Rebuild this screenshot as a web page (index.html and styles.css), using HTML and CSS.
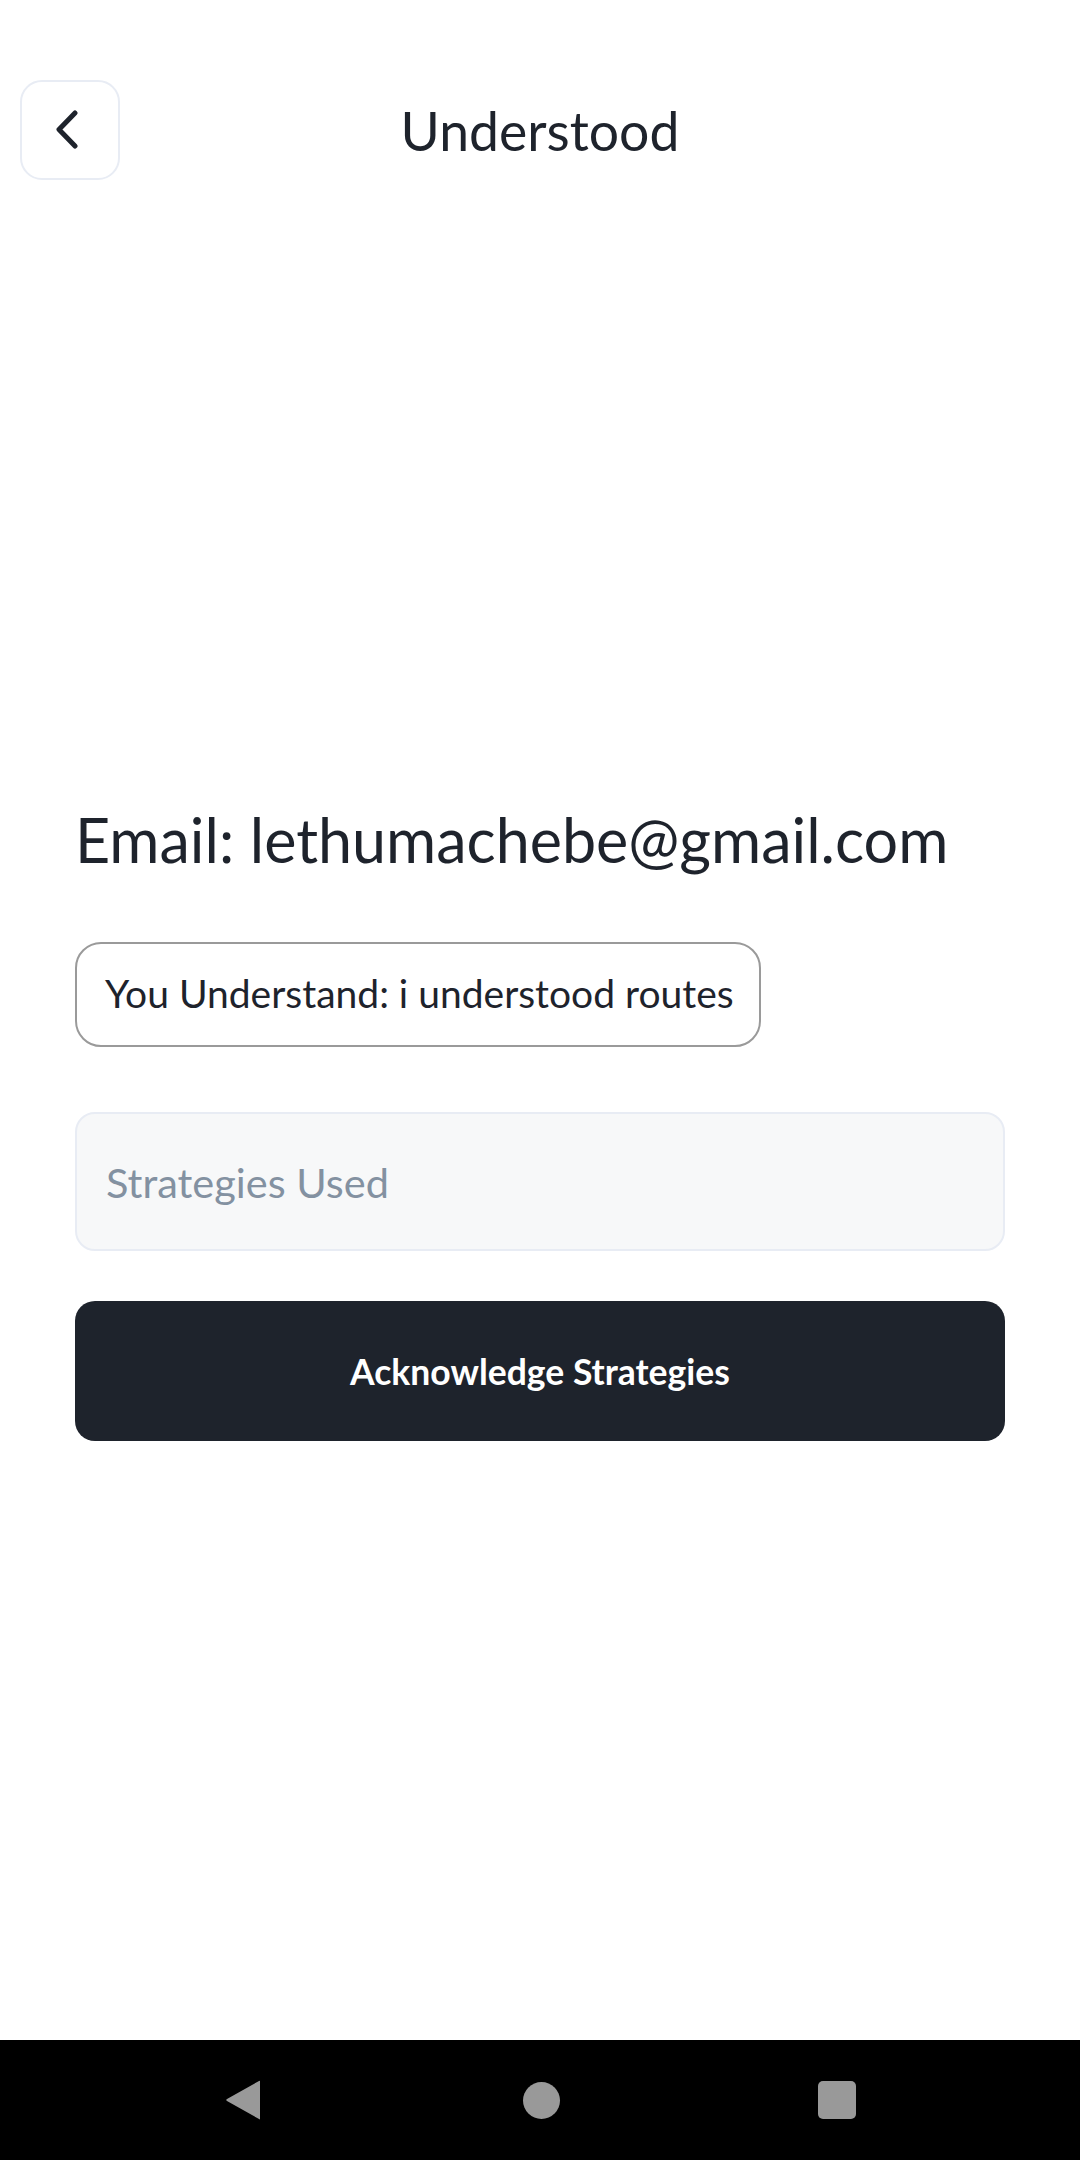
FILE: index.html
```html
<!DOCTYPE html>
<html lang="en">
<head>
<meta charset="utf-8">
<title>Understood</title>
<link rel="stylesheet" href="styles.css">
</head>
<body>
<div class="screen">
  <header class="header">
    <button class="back-btn" aria-label="Back">
      <svg class="back-icon" width="24" height="40" viewBox="0 0 24 40">
        <path d="M19 3 L3 19.5 L19 36" fill="none" stroke="#1E232C" stroke-width="5" stroke-linecap="round" stroke-linejoin="round"/>
      </svg>
    </button>
    <h1 class="title">Understood</h1>
    <span class="spacer"></span>
  </header>

  <main class="content">
    <p class="email">Email: lethumachebe@gmail.com</p>
    <div class="understand-box">You Understand: i understood routes</div>
    <div class="strategies-input">Strategies Used</div>
    <button class="primary-btn">Acknowledge Strategies</button>
  </main>

  <nav class="navbar">
    <svg class="nav-back" width="40" height="40" viewBox="0 0 40 40">
      <path d="M35 1.5 L35 38.5 Q35 40 34 39 L2 21 Q0.5 20 2 19 L34 1 Q35 0.5 35 1.5 Z" fill="#999999"/>
    </svg>
    <span class="nav-home"></span>
    <span class="nav-recent"></span>
  </nav>
</div>
</body>
</html>
```

FILE: styles.css
```css
html, body {
  margin: 0;
  padding: 0;
  background: #ffffff;
}

body {
  font-family: "Lato", "Noto Sans", sans-serif;
  color: #1E232C;
}

.screen {
  width: 1080px;
  min-height: 2160px;
  display: flex;
  flex-direction: column;
}

.header {
  display: grid;
  grid-template-columns: 100px 1fr 100px;
  align-items: center;
  padding: 80px 20px 0;
}

.back-btn {
  box-sizing: border-box;
  width: 100px;
  height: 100px;
  border: 2.5px solid #E8ECF4;
  border-radius: 22px;
  background: #ffffff;
  display: flex;
  align-items: center;
  justify-content: center;
  padding: 0 4px 0 0;
  margin: 0;
}

.title {
  margin: 0;
  text-align: center;
  font-size: 53.5px;
  font-weight: 400;
  line-height: 100px;
  color: #1E232C;
}

.content {
  flex: 1;
  display: flex;
  flex-direction: column;
  align-items: flex-start;
  padding: 0 75px;
}

.email {
  margin: 622px 0 0;
  font-size: 61px;
  line-height: 76px;
  font-weight: 400;
  color: #1E232C;
  white-space: nowrap;
}

.understand-box {
  box-sizing: border-box;
  margin-top: 64px;
  width: 686px;
  height: 105px;
  border: 2.5px solid #9A9A9A;
  border-radius: 26px;
  display: flex;
  align-items: center;
  padding: 0 0 4px 28px;
  font-size: 39px;
  color: #1E232C;
  white-space: nowrap;
}

.strategies-input {
  box-sizing: border-box;
  margin-top: 65px;
  width: 100%;
  height: 139px;
  border: 2.5px solid #E8ECF4;
  border-radius: 20px;
  background: #F7F8F9;
  display: flex;
  align-items: center;
  padding: 0 0 0 29px;
  font-size: 41.5px;
  color: #8391A1;
}

.primary-btn {
  box-sizing: border-box;
  margin: 50px 0 0;
  width: 100%;
  height: 140px;
  border: none;
  border-radius: 20px;
  background: #1E232C;
  color: #ffffff;
  font-family: "Lato", "Noto Sans", sans-serif;
  font-size: 35.5px;
  font-weight: 700;
  display: flex;
  align-items: center;
  justify-content: center;
  padding: 0;
}

.navbar {
  height: 120px;
  background: #000000;
  display: flex;
  align-items: center;
  justify-content: center;
  gap: 258px;
}

.nav-back {
  display: block;
}

.nav-home {
  width: 37px;
  height: 37px;
  border-radius: 50%;
  background: #999999;
}

.nav-recent {
  width: 38px;
  height: 38px;
  border-radius: 5px;
  background: #999999;
}
```
